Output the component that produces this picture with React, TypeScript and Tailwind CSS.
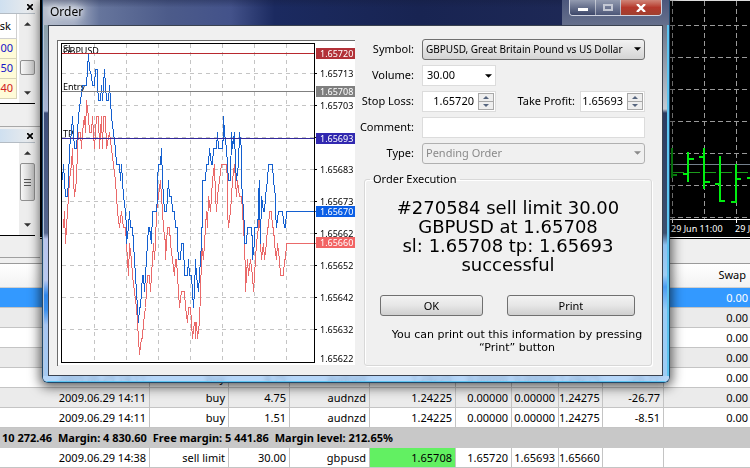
import React from "react";

const UI = "font-['Noto_Sans','Open_Sans',sans-serif]";

const askLine =
  "62,180 63,164 65,196 67,196 68,180 69,148 71,132 72,116 73,132 74,148 76,148 77,132 78,116 80,100 82,85 86,85 87,69 88,53 89,69 91,75 92,85 94,85 95,69 97,69 97,85 98,100 100,100 101,85 102,100 103,85 104,69 105,85 106,100 108,100 109,85 110,100 111,116 113,132 115,148 116,164 119,164 120,180 121,164 122,180 123,196 125,211 126,227 126,243 128,227 129,211 130,227 132,227 133,243 134,259 135,275 136,291 137,307 138,322 139,307 140,307 141,291 142,275 143,275 144,291 145,275 146,259 147,243 148,227 149,227 151,243 152,211 156,211 157,196 157,180 158,164 160,164 161,148 162,180 163,196 164,211 166,211 167,196 168,180 169,196 171,196 172,211 174,211 175,227 177,227 177,243 178,259 180,259 181,243 183,243 184,275 187,275 188,259 189,275 191,275 192,291 193,307 194,291 195,259 196,275 198,291 199,275 200,259 201,243 202,211 202,180 205,180 206,164 208,164 209,148 211,164 212,164 213,148 216,148 217,132 218,148 222,148 223,132 223,116 224,132 226,148 227,164 228,180 230,180 231,132 232,148 234,132 235,164 236,180 238,164 239,132 241,148 241,180 242,196 243,211 244,227 244,243 246,243 247,227 251,227 252,243 252,259 254,243 254,227 257,227 258,211 258,196 259,180 259,196 260,243 261,196 263,211 264,211 265,196 267,180 268,164 272,164 273,180 275,196 275,211 276,227 278,211 282,211 284,227 285,227 286,211 315,211";

const bidLine =
  "62,227 63,227 64,211 65,243 66,227 67,211 68,196 69,180 71,164 72,148 73,180 74,196 76,180 77,148 78,132 80,132 81,148 82,132 84,116 85,132 86,100 88,116 89,132 91,132 92,116 93,132 94,148 96,116 98,116 99,148 101,116 102,148 103,116 105,116 106,148 109,132 111,148 113,164 115,180 116,196 117,211 119,227 121,211 123,227 125,227 126,243 127,259 128,275 129,243 131,259 132,275 134,291 136,307 137,322 138,338 139,354 141,338 142,338 143,322 145,307 146,291 147,275 149,275 150,291 151,275 152,259 153,243 154,259 155,243 156,211 158,196 160,180 161,196 162,211 163,227 165,243 165,259 166,243 167,227 169,227 170,243 172,259 174,275 175,259 176,259 177,275 178,291 179,307 181,291 184,291 185,307 187,322 188,307 190,307 191,322 192,338 194,322 195,322 195,338 196,322 197,338 199,322 200,291 201,259 201,243 203,259 204,243 205,227 206,211 207,227 208,196 210,211 212,180 214,164 215,196 216,211 217,196 219,180 221,164 226,164 227,180 227,211 228,227 230,211 232,180 234,164 236,196 237,180 239,196 241,196 242,211 243,227 244,243 245,275 245,291 247,259 248,275 250,259 252,275 253,291 255,259 256,243 258,227 259,211 260,243 261,259 263,243 264,259 266,243 267,227 268,227 269,211 271,211 272,227 273,227 274,243 276,259 277,243 279,259 280,275 283,275 284,259 285,259 286,243 315,243";

const axisTicks = [
  { y: 73, text: "1.65713" },
  { y: 105, text: "1.65703" },
  { y: 169, text: "1.65683" },
  { y: 201, text: "1.65673" },
  { y: 233, text: "1.65662" },
  { y: 265, text: "1.65652" },
  { y: 297, text: "1.65642" },
  { y: 329, text: "1.65632" },
  { y: 358, text: "1.65622" },
];

const priceTags = [
  { y: 53, text: "1.65720", fill: "#b23138" },
  { y: 91, text: "1.65708", fill: "#7f7f7f" },
  { y: 138, text: "1.65693", fill: "#3128b0" },
  { y: 211, text: "1.65670", fill: "#0b5fe6" },
  { y: 242, text: "1.65660", fill: "#f26464" },
];

function TickChart() {
  const vertical = [94, 126, 158, 190, 222, 254, 286];
  const horizontal = [73, 105, 137, 169, 201, 233, 265, 297, 329];
  return (
    <svg viewBox="58 41 297 324" className={`h-[324px] w-[297px] bg-white text-[9px] ${UI}`} role="img" aria-label="GBPUSD tick chart">
      <g shapeRendering="crispEdges" fill="none" stroke="#c4c4c4" strokeDasharray="4 4">
        {vertical.map((x) => (
          <path key={x} d={`M${x + 0.5} 44V362`} />
        ))}
        {horizontal.map((y) => (
          <path key={y} d={`M62 ${y + 0.5}H315`} />
        ))}
      </g>
      <text x="63" y="52">SL</text>
      <text x="63" y="54">GBPUSD</text>
      <text x="63" y="90">Entry</text>
      <text x="63" y="137">TP</text>
      <g shapeRendering="crispEdges" fill="none">
        <polyline points={bidLine} stroke="#ea6a6a" transform="translate(.5 .5)" />
        <polyline points={askLine} stroke="#1460d0" transform="translate(.5 .5)" />
        <path d="M62 53.5H315" stroke="#b8282e" />
        <path d="M62 91.5H315" stroke="#808080" />
        <path d="M62 138.5H315" stroke="#33289c" />
        <rect x="61.5" y="43.5" width="253" height="319" stroke="#000" />
        {horizontal.map((y) => (
          <path key={y} d={`M315 ${y + 0.5}h2`} stroke="#000" />
        ))}
      </g>
      {axisTicks.map((t) => (
        <text key={t.text} x="320" y={t.y + 4}>
          {t.text}
        </text>
      ))}
      {priceTags.map((t) => (
        <g key={t.text}>
          <rect x="316" y={t.y - 5} width="39" height="11" fill={t.fill} />
          <text x="320" y={t.y + 4} fill="#fff">
            {t.text}
          </text>
        </g>
      ))}
    </svg>
  );
}

function Caret({ className = "", up = false }: { className?: string; up?: boolean }) {
  return (
    <svg viewBox="0 0 8 4" className={className} fill="currentColor" aria-hidden="true">
      <path d={up ? "M0 4L4 0L8 4Z" : "M0 0H8L4 4Z"} />
    </svg>
  );
}

function ScrollBar({ children }: { children: React.ReactNode }) {
  return (
    <div className="flex w-4 flex-col items-center bg-[#ededed] py-1 text-[#333]">
      <Caret up className="mt-1 h-1 w-[7px] shrink-0" />
      {children}
      <Caret className="mb-1 mt-auto h-1 w-[7px] shrink-0" />
    </div>
  );
}

function PanelTitle({ label }: { label: string }) {
  return (
    <div className="flex h-[14px] w-[35px] items-center justify-end border-b border-[#b4bcc4] bg-gradient-to-r from-[#cfe0f0] to-[#ececec] pr-[2px]">
      <button aria-label={label}>
        <svg viewBox="0 0 6 6" className="h-[6px] w-[6px]" stroke="#000" strokeWidth="1.7" aria-hidden="true">
          <path d="M0 0L6 6M6 0L0 6" />
        </svg>
      </button>
    </div>
  );
}

function SidePanels() {
  const quotes = [
    { text: "00", tone: "text-[#1414c8]" },
    { text: "50", tone: "text-[#1414c8]" },
    { text: "40", tone: "text-[#d02020]" },
  ];
  return (
    <aside className="w-10 shrink-0 overflow-hidden bg-[#efefef]">
      <PanelTitle label="Close quotes" />
      <div className="flex h-[90px] w-[35px] border-b border-black bg-white">
        <div className="w-[19px] shrink-0 text-[11px]">
          <div className="flex h-[25px] w-[17px] items-center justify-end border-b border-r border-[#d0d0d0] pr-[5px]">sk</div>
          {quotes.map((q) => (
            <div key={q.text} className={`flex h-5 w-[17px] items-center justify-end border-b border-r border-[#d8d4b8] bg-[#fffbd8] pr-[3px] ${q.tone}`}>
              {q.text}
            </div>
          ))}
        </div>
        <ScrollBar>
          <div className="mt-[34px] h-[15px] w-[15px] shrink-0 rounded-xs border border-[#8f8f8f] bg-gradient-to-r from-[#f8f8f8] to-[#c8c8c8]" />
        </ScrollBar>
      </div>
      <div className="mb-[2px] h-[23px] border-b border-[#a8a8a8]" />
      <PanelTitle label="Close navigator" />
      <div className="flex h-[93px] w-[35px] border-b border-black bg-white">
        <div className="w-[19px] shrink-0" />
        <ScrollBar>
          <div className="mt-2 flex h-[38px] w-[15px] shrink-0 flex-col items-center justify-center gap-[2px] rounded-xs border border-[#8f8f8f] bg-gradient-to-r from-[#f8f8f8] to-[#c0c0c0]">
            <span className="h-px w-[7px] bg-[#555]" />
            <span className="h-px w-[7px] bg-[#555]" />
            <span className="h-px w-[7px] bg-[#555]" />
          </div>
        </ScrollBar>
      </div>
      <div className="h-[22px] border-b border-[#a0a0a0]" />
    </aside>
  );
}

function PriceChart() {
  return (
    <div className="flex min-w-0 flex-1 flex-col bg-[#efefef]">
      <div className="flex h-[238px] justify-end border-b border-white bg-black">
        <svg viewBox="670 0 80 237" className={`h-[237px] w-20 ${UI}`} role="img" aria-label="Bar chart">
          <g shapeRendering="crispEdges" fill="none">
            <path d="M670 .5H750" stroke="#ddd" />
            <g stroke="#9a9a9a" strokeDasharray="5 3">
              <path d="M672.5 1V219M704.5 1V219M736.5 1V219" />
              <path d="M670 25.5H750M670 57.5H750M670 89.5H750M670 121.5H750M670 153.5H750M670 185.5H750M670 217.5H750" />
            </g>
            <path d="M670 164.5H750" stroke="#74808c" />
            <path d="M673 172.5H750" stroke="#1c9c1c" strokeDasharray="11 5" />
            <g stroke="#00ee10" strokeWidth="2">
              <path d="M672 148V178M672 175H677" stroke="#08a010" />
              <path d="M688 152V182M683 174H688M688 159H694" />
              <path d="M704 148V189M699 157H704M704 182H710" />
              <path d="M720 156V202M715 184H720M720 201H725" />
              <path d="M736 164V203M731 202H736M736 179H741M747 178H750" />
            </g>
            <path d="M670 219.5H750M672.5 219V223M736.5 219V223" stroke="#fff" />
          </g>
          <g fill="#fff" className="text-[9px]">
            <text x="671" y="232">29 Jun 11:00</text>
            <text x="735" y="232">29 J</text>
          </g>
        </svg>
      </div>
      <div className="h-px bg-black" />
    </div>
  );
}

const concealed = ["", "", "", "", "", "", "", "", "", "0.00"];
const trades: { cells: string[]; tone: string }[] = [
  { cells: concealed, tone: "bg-[#3399ff] text-white" },
  { cells: concealed, tone: "bg-[#ebebeb]" },
  { cells: concealed, tone: "bg-white" },
  { cells: concealed, tone: "bg-[#ebebeb]" },
  { cells: ["2009.06.29 14:11", "buy", "4.75", "audnzd", "1.24225", "0.00000", "0.00000", "1.24275", "-26.77", "0.00"], tone: "bg-white" },
  { cells: ["2009.06.29 14:11", "buy", "4.75", "audnzd", "1.24225", "0.00000", "0.00000", "1.24275", "-26.77", "0.00"], tone: "bg-[#ebebeb]" },
  { cells: ["2009.06.29 14:11", "buy", "1.51", "audnzd", "1.24225", "0.00000", "0.00000", "1.24275", "-8.51", "0.00"], tone: "bg-white" },
];
const pending = ["2009.06.29 14:38", "sell limit", "30.00", "gbpusd", "1.65708", "1.65720", "1.65693", "1.65660", "", ""];
const cell = "h-5 border-b border-r border-[#c4c4c4] p-0 pr-[3px] text-right leading-[19px] last:border-r-0 last:pr-[2px]";

function TradeTable() {
  return (
    <table className="w-full table-fixed border-separate border-spacing-0 whitespace-nowrap text-[11px]">
      <colgroup>
        <col className="w-[150px]" />
        <col className="w-[79px]" />
        <col className="w-[61px]" />
        <col className="w-[80px]" />
        <col className="w-[86px]" />
        <col className="w-[56px]" />
        <col className="w-[47px]" />
        <col className="w-[44px]" />
        <col className="w-[61px]" />
        <col />
      </colgroup>
      <thead>
        <tr className="bg-gradient-to-b from-white to-[#f2f2f2]">
          <td colSpan={9} className="h-6 border-b border-[#d0d0d0] p-0" />
          <th className="h-6 border-b border-[#d0d0d0] p-0 pr-1 text-right font-normal">Swap</th>
        </tr>
      </thead>
      <tbody>
        {trades.map((t, i) => (
          <tr key={i} className={t.tone}>
            {t.cells.map((c, j) => (
              <td key={j} className={cell}>{c}</td>
            ))}
          </tr>
        ))}
        <tr className="bg-[#c8c8c8]">
          <td colSpan={10} className="h-5 p-0 pl-[2px] font-bold leading-5">
            <span className="flex gap-[6px]">
              <span>10 272.46</span>
              <span>Margin: 4 830.60</span>
              <span>Free margin: 5 441.86</span>
              <span>Margin level: 212.65%</span>
            </span>
          </td>
        </tr>
        <tr className="bg-white">
          {pending.map((c, j) => (
            <td key={j} className={j === 4 ? `${cell} bg-[#62f062]` : cell}>{c}</td>
          ))}
        </tr>
      </tbody>
    </table>
  );
}

const field = "h-[21px] border border-[#dcdcdc] bg-white text-[11px] text-black outline-none";

function FormRow({ id, label, children }: { id: string; label: string; children: React.ReactNode }) {
  return (
    <div className="flex h-[21px] items-center gap-2">
      <label htmlFor={id} className="flex w-[50px] shrink-0 justify-end whitespace-nowrap">{label}</label>
      {children}
    </div>
  );
}

function PriceSpinner({ id, value, className }: { id: string; value: string; className: string }) {
  return (
    <div className={`flex items-center pr-[1px] ${field} ${className}`}>
      <input id={id} defaultValue={value} className="min-w-0 flex-1 bg-transparent pr-1 text-right outline-none" />
      <div className="flex h-[17px] w-4 flex-col border border-[#a8a8a8] bg-[#eeeeee] text-[#56657e]">
        <button aria-label={`Increase ${id}`} className="flex flex-1 items-center justify-center border-b border-[#a8a8a8]">
          <Caret up className="h-[3px] w-[6px]" />
        </button>
        <button aria-label={`Decrease ${id}`} className="flex flex-1 items-center justify-center">
          <Caret className="h-[3px] w-[6px]" />
        </button>
      </div>
    </div>
  );
}

const pushButton = "h-[21px] rounded-[3px] border border-[#707070] bg-gradient-to-b from-[#f3f3f3] via-[#e6e6e6] to-[#cfcfcf] text-[11px] leading-none";

function OrderForm() {
  return (
    <form className="flex min-w-0 flex-1 flex-col" onSubmit={(e) => e.preventDefault()}>
      <div className="flex flex-col gap-[5px] pr-[7px]">
        <FormRow id="symbol" label="Symbol:">
          <div className="relative flex min-w-0 flex-1">
            <select id="symbol" className="h-[21px] w-full appearance-none rounded-[3px] border border-[#707070] bg-gradient-to-b from-[#f3f3f3] to-[#d4d4d4] pl-[3px] text-[10px] outline-none">
              <option>GBPUSD, Great Britain Pound vs US Dollar</option>
            </select>
            <Caret className="pointer-events-none absolute right-1 top-2 h-1 w-[7px]" />
          </div>
        </FormRow>
        <FormRow id="volume" label="Volume:">
          <div className="relative flex w-[74px]">
            <select id="volume" defaultValue="30.00" className={`${field} w-full appearance-none pl-1`}>
              <option>30.00</option>
            </select>
            <Caret className="pointer-events-none absolute right-1 top-[9px] h-1 w-[7px]" />
          </div>
        </FormRow>
        <div className="flex items-center justify-between">
          <FormRow id="stop-loss" label="Stop Loss:">
            <PriceSpinner id="stop-loss" value="1.65720" className="w-[74px]" />
          </FormRow>
          <div className="flex items-center gap-[5px]">
            <label htmlFor="take-profit" className="whitespace-nowrap">Take Profit:</label>
            <PriceSpinner id="take-profit" value="1.65693" className="w-[65px]" />
          </div>
        </div>
        <FormRow id="comment" label="Comment:">
          <input id="comment" className={`${field} min-w-0 flex-1 px-1`} />
        </FormRow>
        <FormRow id="type" label="Type:">
          <div className="relative flex min-w-0 flex-1 text-[#8a8a8a]">
            <select id="type" disabled className="h-[21px] w-full appearance-none rounded-[3px] border border-[#b0b0b0] bg-[#f0f0f0] pl-[3px] text-[11px] opacity-100">
              <option>Pending Order</option>
            </select>
            <Caret className="pointer-events-none absolute right-1 top-2 h-1 w-[7px]" />
          </div>
        </FormRow>
      </div>
      <fieldset className="mt-2 flex-1 rounded-[3px] border border-[#d8d8d8] shadow-[inset_1px_1px_0_#fff,1px_1px_0_#fff]">
        <legend className="ml-[5px] px-[3px] leading-[14px]">Order Execution</legend>
        <p className="mt-3 text-center font-['DejaVu_Sans',Verdana,sans-serif] text-[18px] leading-[19px]">
          #270584 sell limit 30.00
          <br />
          GBPUSD at 1.65708
          <br />
          sl: 1.65708 tp: 1.65693
          <br />
          successful
        </p>
        <div className="mt-[21px] flex gap-6 pl-[15px] pr-4">
          <button className={`${pushButton} flex-[4]`}>OK</button>
          <button className={`${pushButton} flex-[5]`}>Print</button>
        </div>
        <p className="mt-3 pl-[18px] text-center font-['DejaVu_Sans',Verdana,sans-serif] text-[11px] leading-[13px]">
          You can print out this information by pressing
          <br />
          “Print” button
        </p>
      </fieldset>
    </form>
  );
}

function TitleBar() {
  const button = "flex items-center justify-center border-white/50";
  return (
    <header className="flex h-[25px] shrink-0 items-start justify-between bg-[linear-gradient(180deg,rgba(20,28,60,0.35),transparent_30%),linear-gradient(90deg,#b4bccb_0%,#a4aec4_5%,#66759c_9%,#4c5b8a_20%,#43528a_30%,#1b2a60_37%,#182452_60%,#212b58)]">
      <h1 className="pl-[7px] pt-1 text-[12px] leading-4 [text-shadow:0_0_5px_#fff,0_0_8px_#fff,0_0_12px_#fff]">Order</h1>
      <div className="flex h-full w-[107px] items-start bg-gradient-to-b from-[#4c577c] to-[#66708c] pl-[7px]">
        <div className="flex h-4 w-[93px] overflow-hidden rounded-b-[4px] border border-t-0 border-[#d0d4e0]">
          <button aria-label="Minimize" className={`${button} w-[26px] border-r bg-gradient-to-b from-[#939bb0] to-[#3d4769]`}>
            <span className="mt-1 h-[3px] w-[10px] bg-white" />
          </button>
          <button aria-label="Maximize" className={`${button} w-[25px] border-r bg-gradient-to-b from-[#939bb0] to-[#4d5778]`}>
            <span className="h-[7px] w-[10px] border-2 border-[#c4c8d4]" />
          </button>
          <button aria-label="Close" className={`${button} flex-1 bg-gradient-to-b from-[#cf8478] via-[#b5382c] to-[#a0402e]`}>
            <svg viewBox="0 0 10 8" className="h-2 w-[10px]" stroke="#fff" strokeWidth="2.4" aria-hidden="true">
              <path d="M1 0L9 8M9 0L1 8" />
            </svg>
          </button>
        </div>
      </div>
    </header>
  );
}

function OrderDialog() {
  return (
    <section
      role="dialog"
      aria-label="Order"
      className="absolute left-[42px] right-20 top-0 flex flex-col overflow-hidden rounded-b-[6px] border border-t-0 border-[#20486c] shadow-[0_2px_12px_2px_rgba(0,0,0,0.65)] backdrop-blur-[2px]"
    >
      <TitleBar />
      <div className="flex">
        <div className="w-[5px] shrink-0 border-l border-[#b8c8dc] bg-[linear-gradient(#8ba0aa_0px,#a9b5d6_86px,#3c4c78_88px,#56678f_208px,#b9c5ee_214px,#b9c8f0_255px,#2f86ea_270px,#3c90ee_285px,#a8c6f2_300px,#a5caf2)]" />
        <div className="flex min-w-0 flex-1 gap-[9px] border border-[#3a4250] bg-[#f0f0f0] pb-[9px] pl-2 pr-[10px] pt-[13px]">
          <div className="mt-px h-[326px] shrink-0 border-l border-t border-[#6c6c6c]">
            <TickChart />
          </div>
          <OrderForm />
        </div>
        <div className="w-[6px] shrink-0 border-r-2 border-[#5cc4f0] bg-[linear-gradient(#6b7488_0px,#c3c9d2_84px,#2c3c62_88px,#3d5070_208px,#8fc0ee_220px,#9fccf4_250px,#4c9cf0_262px,#9accf6_285px,#9fccf4)]" />
      </div>
      <div className="h-[6px] border-b border-[#5cc4f0] bg-[#a4ccf6]/80" />
    </section>
  );
}

export default function App() {
  return (
    <main className={`relative min-h-screen overflow-hidden bg-[#efefef] text-[11px] text-black ${UI}`}>
      <div className="flex">
        <SidePanels />
        <PriceChart />
      </div>
      <div className="mt-[5px] border-t border-[#9a9a9a]">
        <TradeTable />
      </div>
      <OrderDialog />
    </main>
  );
}
